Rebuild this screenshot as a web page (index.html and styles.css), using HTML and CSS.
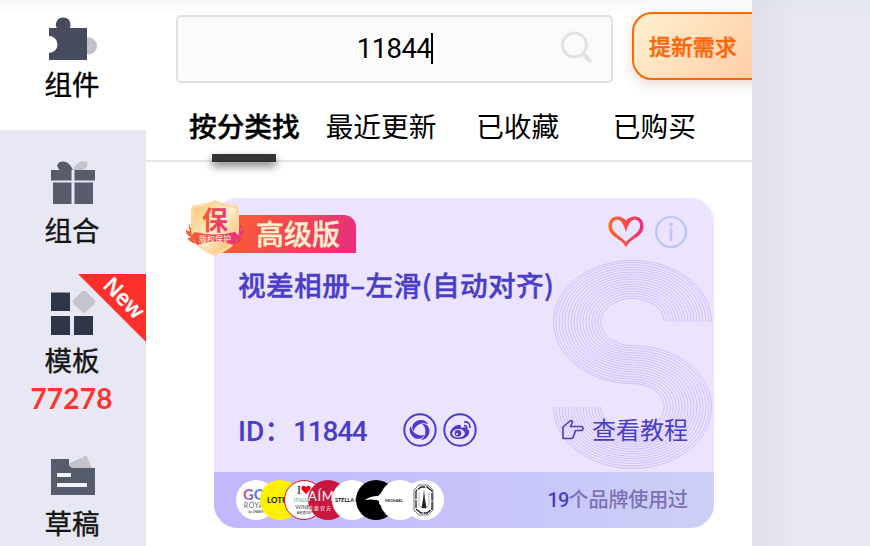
FILE: index.html
```html
<!DOCTYPE html>
<html lang="zh-CN">
<head>
<meta charset="utf-8">
<title>组件</title>
<link rel="stylesheet" href="styles.css">
</head>
<body>
<div class="app">
  <nav class="sidebar">
    <a class="nav-item active">
      <svg class="nav-icon" width="50" height="44" viewBox="0 0 50 44"><circle cx="40.500" cy="29" r="8.500" fill="#c1c1cc"/><path d="M1 11h7.700a7.300 7.300 0 1 1 13 0H39v32H1v-7a8.500 8.500 0 1 0 0-17z" fill="#474b5e"/></svg>
      <span class="nav-label">组件</span>
    </a>
    <a class="nav-item combo">
      <svg class="nav-icon" width="50" height="44" viewBox="0 0 50 44"><path d="M25 10C28 2 34 0 39 2c2 4-2 8-5 8z" fill="#c4c4ce"/><path d="M25 10C22 3 17 0 12 2c-4 2-3 6 0 8z" fill="#575c6d"/><path d="M3 10h20.500v10.500H3zM26.500 10H47v10.500H26.500zM5 22.500h18.500V44H5zM26.500 22.500H45V44H26.500z" fill="#575c6d"/></svg>
      <span class="nav-label">组合</span>
    </a>
    <a class="nav-item template">
      <svg class="nav-icon" width="50" height="46" viewBox="0 0 50 46"><path d="M3 3.500h19V22H3zM3 27h19v19H3zM26 27h19v19H26z" fill="#30364a"/><rect x="27.300" y="4" width="17.400" height="17.400" rx="3.500" fill="#c4c4ce" transform="rotate(45 36 12.700)"/></svg>
      <span class="nav-label">模板</span>
      <span class="nav-count">77278</span>
      <span class="ribbon"><b>New</b></span>
    </a>
    <a class="nav-item draft">
      <svg class="nav-icon" width="50" height="42" viewBox="0 0 50 42"><path d="M20 10 38.500 1.500 46 19H22z" fill="#c4c4ce"/><path d="M3 5h18v6.500l3 2.500h23v27H3z" fill="#575c6d"/><path d="M9 19h14v4H9zM9 29h30v4H9z" fill="#f1f3fa"/></svg>
      <span class="nav-label">草稿</span>
    </a>
  </nav>
  <main class="panel">
    <header class="toolbar">
      <div class="search"><span class="query">11844</span><i class="caret"></i>
        <svg class="search-icon" width="34" height="34" viewBox="0 0 34 34"><circle cx="14.500" cy="14" r="12" fill="none" stroke="#e2e2e5" stroke-width="3"/><path d="m22.500 22.500 8.500 8.500" stroke="#e2e2e5" stroke-width="4"/></svg>
      </div>
      <button class="request">提新需求</button>
    </header>
    <div class="tabs">
      <span class="tab current">按分类找</span>
      <span class="tab">最近更新</span>
      <span class="tab">已收藏</span>
      <span class="tab">已购买</span>
    </div>
    <article class="card">
      <svg class="pattern" width="161" height="212" viewBox="-1 -1 162 212" preserveAspectRatio="none">
        <path d="M159.500 62A79.500 61.500 0 0 0 .5 62A79.500 61.500 0 0 0 80 123.500A32 23.500 0 0 1 112 147A32 23.500 0 0 1 48 147"/>
        <path d="M157 62A77 59.600 0 0 0 3 62A77 59.600 0 0 0 80 121.600A35 25.400 0 0 1 115 147A35 25.400 0 0 1 45 147"/>
        <path d="M154 62A74 57.200 0 0 0 6 62A74 57.200 0 0 0 80 119.200A38 27.800 0 0 1 118 147A38 27.800 0 0 1 42 147"/>
        <path d="M151 62A71 54.800 0 0 0 9 62A71 54.800 0 0 0 80 116.800A41 30.200 0 0 1 121 147A41 30.200 0 0 1 39 147"/>
        <path d="M148 62A68 52.400 0 0 0 12 62A68 52.400 0 0 0 80 114.400A44 32.600 0 0 1 124 147A44 32.600 0 0 1 36 147"/>
        <path d="M145 62A65 50 0 0 0 15 62A65 50 0 0 0 80 112A47 35 0 0 1 127 147A47 35 0 0 1 33 147"/>
        <path d="M142 62A62 47.600 0 0 0 18 62A62 47.600 0 0 0 80 109.600A50 37.400 0 0 1 130 147A50 37.400 0 0 1 30 147"/>
        <path d="M139 62A59 45.200 0 0 0 21 62A59 45.200 0 0 0 80 107.200A53 39.800 0 0 1 133 147A53 39.800 0 0 1 27 147"/>
        <path d="M136 62A56 42.800 0 0 0 24 62A56 42.800 0 0 0 80 104.800A56 42.200 0 0 1 136 147A56 42.200 0 0 1 24 147"/>
        <path d="M133 62A53 40.400 0 0 0 27 62A53 40.400 0 0 0 80 102.400A59 44.600 0 0 1 139 147A59 44.600 0 0 1 21 147"/>
        <path d="M130 62A50 38 0 0 0 30 62A50 38 0 0 0 80 100A62 47 0 0 1 142 147A62 47 0 0 1 18 147"/>
        <path d="M127 62A47 35.600 0 0 0 33 62A47 35.600 0 0 0 80 97.600A65 49.400 0 0 1 145 147A65 49.400 0 0 1 15 147"/>
        <path d="M124 62A44 33.200 0 0 0 36 62A44 33.200 0 0 0 80 95.200A68 51.800 0 0 1 148 147A68 51.800 0 0 1 12 147"/>
        <path d="M121 62A41 30.800 0 0 0 39 62A41 30.800 0 0 0 80 92.800A71 54.200 0 0 1 151 147A71 54.200 0 0 1 9 147"/>
        <path d="M118 62A38 28.400 0 0 0 42 62A38 28.400 0 0 0 80 90.400A74 56.600 0 0 1 154 147A74 56.600 0 0 1 6 147"/>
        <path d="M115 62A35 26 0 0 0 45 62A35 26 0 0 0 80 88A77 59 0 0 1 157 147A77 59 0 0 1 3 147"/>
        <path d="M112 62A32 23.600 0 0 0 48 62A32 23.600 0 0 0 80 85.600A79.500 61.400 0 0 1 159.500 147A79.500 61.400 0 0 1 .5 147"/>
      </svg>
      <div class="card-top">
        <span class="level">高级版</span>
        <svg class="shield" width="62" height="58" viewBox="0 0 62 58">
          <defs>
            <linearGradient id="gold" x1="0" y1="0" x2="1" y2="1"><stop offset="0" stop-color="#f7c36f"/><stop offset=".5" stop-color="#fff0d0"/><stop offset="1" stop-color="#f3ae50"/></linearGradient>
            <linearGradient id="hot" x1="0" y1="0" x2="1" y2="0"><stop offset="0" stop-color="#fa5a30"/><stop offset="1" stop-color="#e5347a"/></linearGradient>
          </defs>
          <path d="M5 23q0 5 4 8l1-4q1 5 4 8v10q-6 0-11-6 4 0 4-1-6-3-5-8 2 3 4 2-2-4-1-9zM57 23q0 5-4 8l-1-4q-1 5-4 8v10q6 0 11-6-4 0-4-1 6-3 5-8-2 3-4 2 2-4 1-9z" fill="url(#hot)"/>
          <path d="M31 1q11 5 21 5 3 1 3 5v20c0 14-11 21-24 26C18 52 7 45 7 31V11q0-4 3-5 10 0 21-5z" fill="#fbd9a4"/>
          <path d="M31 4q10 4 19 5 2 0 2 3v19c0 12-10 18-21 23-11-5-21-11-21-23V12q0-3 2-3 9-1 19-5z" fill="url(#gold)"/>
          <text class="seal" x="31" y="31" text-anchor="middle" font-size="26" font-weight="700">保</text>
          <path d="M11 33q20 5 40 0l4 4-5 9q-19-7-37 0l-6-9z" fill="url(#hot)"/>
          <text x="31" y="42.500" text-anchor="middle" font-size="8" font-weight="500" fill="#ffe5c5">版权保护</text>
        </svg>
        <svg class="heart" width="38" height="36" viewBox="0 0 38 36"><defs><linearGradient id="love"><stop stop-color="#ff681f"/><stop offset="1" stop-color="#e83079"/></linearGradient></defs><path fill="url(#love)" fill-rule="evenodd" d="M19 6.500C16.500 3.500 13.500 2.500 10 2.500 5 2.500 1.500 6.500 1.500 12c0 10 10.500 12 14.500 17q2 2 3 4.500 1-2.500 3-4.500c4-5 14.500-7 14.500-17 0-5.500-3.500-9.500-8.500-9.500-3.500 0-6.500 1-9 4zM19 18C17 12 15 5.700 10 5.700 7 5.700 5 8 5 12c0 7 9 10 14 16 5-6 14-9 14-16 0-4-2-6.300-5-6.300C23 5.700 21 12 19 18z"/></svg>
        <svg class="info" width="34" height="34" viewBox="0 0 34 34"><circle cx="17" cy="17" r="15" fill="none" stroke="#bdc3fc" stroke-width="2.200"/><circle cx="17" cy="9.500" r="2" fill="#bdc3fc"/><path d="M17 14v11" stroke="#bdc3fc" stroke-width="2.600" stroke-linecap="round"/></svg>
      </div>
      <h2 class="title">视差相册–左滑(自动对齐)</h2>
      <div class="meta">
        <span class="id-label">ID：</span><span class="id-value">11844</span>
        <svg class="round first" width="34" height="34" viewBox="0 0 34 34"><circle cx="17" cy="17" r="15.700" fill="none" stroke="#4a3dc8" stroke-width="2"/><g fill="#4a3dc8"><path id="blade" d="M9.500 12.500Q12 7 18 7q5 0 7 4-6-2-10 1-3.500 2-4 6-2.500-2-1.500-5.500z"/><use href="#blade" transform="rotate(120 17 17)"/><use href="#blade" transform="rotate(240 17 17)"/></g></svg>
        <svg class="round" width="34" height="34" viewBox="0 0 34 34"><circle cx="17" cy="17" r="15.700" fill="none" stroke="#4a3dc8" stroke-width="2"/><path d="M7 20c0-4 7-9 10-8q2 1 1 3 6-2 6 1 3 1 2 4c-1 4-5 6-10 6s-9-2-9-6z" fill="#4a3dc8"/><ellipse cx="15.500" cy="20.300" rx="6.300" ry="4.300" fill="#ece3ff"/><circle cx="15" cy="20.300" r="3.300" fill="#4a3dc8"/><circle cx="14" cy="21" r="1.100" fill="#ece3ff"/><path d="M21 9q6-1 6 6M21 12.500q3 0 3 3" fill="none" stroke="#4a3dc8" stroke-width="1.700"/></svg>
        <span class="guide"><svg width="24" height="24" viewBox="0 0 24 24"><path d="M2 20.500V9l7-6q2-1 2.500 1L9.500 8.500H20q2 0 2 2t-2 2h-5.500l-2 6q-.5 2-2.500 2z" fill="none" stroke="#4a3dc8" stroke-width="1.600" stroke-linejoin="round"/></svg><span class="guide-text">查看教程</span></span>
      </div>
      <footer class="brands">
        <div class="logos">
          <span class="logo goo"><b>GO</b><i>ROYAL</i><small>by CHARM</small></span>
          <span class="logo lotus">LOTUS</span>
          <span class="logo wine"><b>I<svg width="10" height="9" viewBox="0 0 10 9"><path d="M5 9 1 5C-1 2 2-1 5 2c3-3 6 0 4 3z" fill="#f00018"/></svg></b><i>ITALIAN</i><i class="dark">WINES</i><small>意起酒大利</small></span>
          <span class="logo aim"><b>AÍM</b><i>爱慕官方</i></span>
          <span class="logo stella">STELLA L</span>
          <span class="logo black"><svg width="40" height="40" viewBox="0 0 40 40"><path d="M9 20q5-4 13-4l4-4v14l-3-2q1-4-3-4-5-1-11 0z" fill="#fff"/></svg></span>
          <span class="logo michael">MICHAEL</span>
          <span class="logo tower"><svg width="22" height="34" viewBox="0 0 22 34"><path d="M6 2h9l5 5v20l-5 5H6l-5-5V7z" fill="none" stroke="#777" stroke-width="1"/><path d="M3 8v18l5 4h6l5-4V8l-5-4H8z" fill="none" stroke="#222" stroke-width="1.300" stroke-dasharray="8 1"/><path d="M6 9v13l3 3h4l3-3V9" fill="none" stroke="#999" stroke-width=".7"/><path d="m11 6 .8 9 1.700 10h-5l1.700-10z" fill="#222"/></svg></span>
        </div>
        <span class="usage"><b>19</b>个品牌使用过</span>
      </footer>
    </article>
  </main>
  <aside class="edge"></aside>
  <div class="shade"></div>
</div>
</body>
</html>
```
FILE: styles.css
```css
* { box-sizing: border-box; }
body { margin: 0; background: #fff; font-family: "Noto Sans CJK SC", sans-serif; color: #000; }
.app { position: relative; display: grid; grid-template-columns: 146px 606px 118px; width: 870px; height: 546px; overflow: hidden; }
.sidebar { background: #e7e8f3; }
.nav-item { position: relative; display: flex; flex-direction: column; align-items: center; height: 130px; padding-top: 17px; color: #161616; }
.nav-item.active { background: #fff; color: #000; }
.nav-icon { flex: none; margin-left: -1px; }
.nav-label { margin: 2px 2px 0 0; font-size: 27.500px; line-height: 40px; -webkit-text-stroke: .4px; }
.nav-item.combo { height: 144px; padding-top: 30px; }
.combo .nav-label { margin-top: 5px; }
.combo .nav-icon, .template .nav-icon, .draft .nav-icon { margin-left: 0; }
.nav-item.template { height: 178px; padding-top: 15px; }
.template .nav-label { margin-top: 4px; }
.nav-count { font: bold 28px/36px Lato, sans-serif; color: #ff332e; margin: 1px 3px 0 0; letter-spacing: .2px; }
.nav-item.draft { padding-top: 2px; }
.draft .nav-label { margin-top: 6px; }
.ribbon { position: absolute; top: 0; right: 0; width: 68px; height: 68px; background: #ff302b; clip-path: polygon(0 0, 100% 0, 100% 100%); }
.ribbon b { position: absolute; left: 23px; top: 7px; font: 600 22px/32px "Open Sans", sans-serif; color: #fff; -webkit-text-stroke: .3px; transform: rotate(45deg); }
.panel { min-width: 0; overflow: hidden; }
.toolbar { display: flex; align-items: flex-start; padding: 12px 0 0 30px; height: 94px; }
.search { position: relative; flex: none; display: flex; justify-content: center; align-items: center; width: 437px; height: 68px; margin-top: 3px; border: 2px solid #e0e0e2; border-radius: 5px; background: #fbfbfd; }
.query { font: 27.500px/40px Roboto, sans-serif; letter-spacing: -.6px; margin-left: 1px; }
.caret { width: 2px; height: 31px; background: #000; margin-top: -2px; }
.search-icon { position: absolute; right: 17px; top: 14px; }
.request { flex: none; width: 140px; height: 68px; margin-left: 19px; padding: 0 0 2px 15px; text-align: left; border: 2px solid #ff6600; border-radius: 20px; background: linear-gradient(125deg, #fff0cf, #ffd1ab 85%); box-shadow: 0 5px 12px #a75b3038; color: #ff6508; font: 500 22px/30px "Noto Sans CJK SC", sans-serif; -webkit-text-stroke: .4px; letter-spacing: -.1px; }
.tabs { display: grid; grid-template-columns: repeat(4, 136.700px); height: 68px; padding-left: 30px; border-bottom: 2px solid #e6e6e6; }
.tab { position: relative; text-align: center; font-size: 27.700px; line-height: 62px; white-space: nowrap; }
.current { font-weight: 500; -webkit-text-stroke: .4px; }
.current::after { content: ""; position: absolute; left: 36px; bottom: -2px; width: 64px; height: 8px; background: #333; box-shadow: 0 4px 8px #0008; }
.card { position: relative; width: 500px; height: 330px; margin: 36px 0 0 68px; border-radius: 24px; background: #ece3ff; color: #4a3dc8; }
.pattern { position: absolute; left: 338px; top: 60.500px; fill: none; stroke: #c9bcf7; stroke-width: .9; }
.card-top { position: relative; display: flex; height: 55px; padding-top: 17px; }
.level { width: 142px; height: 38px; padding-left: 42px; border-radius: 0 12px 0 0; background: linear-gradient(110deg, #ff6328, #e52e7d); color: #fff0cc; font-size: 28px; font-weight: 500; line-height: 37px; -webkit-text-stroke: .4px; }
.shield { position: absolute; left: -30px; top: 1px; }
.seal { fill: url(#hot); }
.heart { margin: -1px 0 0 251px; }
.info { margin: 0 0 0 9px; }
.title { position: relative; margin: 10px 0 0 24px; font-size: 27.700px; line-height: 42px; font-weight: 500; -webkit-text-stroke: .4px; letter-spacing: .37px; white-space: nowrap; }
.meta { position: relative; display: flex; align-items: center; height: 48px; margin-top: 101px; padding: 0 26px 0 24px; font-size: 27px; font-weight: 500; }
.id-label { width: 55px; margin-top: -2px; white-space: nowrap; font-family: Roboto, "Noto Sans CJK SC", sans-serif; font-size: 28px; }
.id-value { width: 74px; margin-top: 3px; font: 500 28px/40px Roboto, sans-serif; letter-spacing: -1.200px; white-space: nowrap; }
.round { flex: none; margin-left: 6px; }
.round.first { margin-left: 36px; }
.guide { display: flex; align-items: center; gap: 7px; margin-left: auto; font-size: 24px; font-weight: 400; white-space: nowrap; }
.guide-text { margin-top: -3px; }
.brands { position: relative; display: flex; align-items: center; height: 56px; margin-top: 18px; padding: 0 26px 0 22px; border-radius: 0 0 24px 24px; background: linear-gradient(90deg, #c1b7fd, #ccd0f7); }
.logos { display: flex; }
.logo { flex: none; display: flex; flex-direction: column; justify-content: center; align-items: center; width: 40px; height: 40px; margin-right: -16px; border-radius: 50%; overflow: hidden; background: #fff; color: #111; font: bold 8px/9px Lato, sans-serif; white-space: nowrap; }
.logo i { font-style: normal; font-weight: 400; }
.logo small { font-size: 3px; font-weight: 400; line-height: 4px; }
.goo b { margin-left: -3px; font-size: 15px; line-height: 14px; color: transparent; background: linear-gradient(100deg, #e24b9e, #706fe1, #22b7e3); background-clip: text; }
.goo i { font-size: 7px; letter-spacing: .5px; color: #666; }
.lotus { background: #fff000; align-items: flex-start; padding-left: 7px; }
.wine { border: 1.500px solid #e30b20; }
.wine b { font: 12px/13px "Liberation Serif", serif; }
.wine i { font-size: 5.500px; line-height: 7px; color: #45a394; }
.wine i.dark { color: #444; }
.wine small { font: 3px/5px "Noto Sans CJK SC", sans-serif; }
.aim { background: #ca173e; color: #fff; align-items: flex-start; }
.aim b { font-size: 13px; line-height: 15px; font-weight: 400; letter-spacing: .6px; }
.aim i { font: 5px/8px "Noto Sans CJK SC", sans-serif; letter-spacing: 1px; }
.stella { font-size: 5.500px; align-items: flex-start; padding-left: 3px; }
.black { background: #000; }
.michael { font-size: 4px; align-items: flex-start; padding-left: 5px; }
.usage { margin-left: auto; font-size: 20px; line-height: 30px; color: #7d70b3; white-space: nowrap; font-family: Roboto, "Noto Sans CJK SC", sans-serif; font-weight: 500; letter-spacing: -.1px; }
.usage b { color: #4a3dc8; font-weight: 500; letter-spacing: -.8px; }
.edge { background: linear-gradient(90deg, #dfe0ea, #e7e8f1 45px); }
.shade { position: absolute; inset: 0 0 auto; height: 16px; background: linear-gradient(#cfd5e526, #cfd5e500); pointer-events: none; }
```
